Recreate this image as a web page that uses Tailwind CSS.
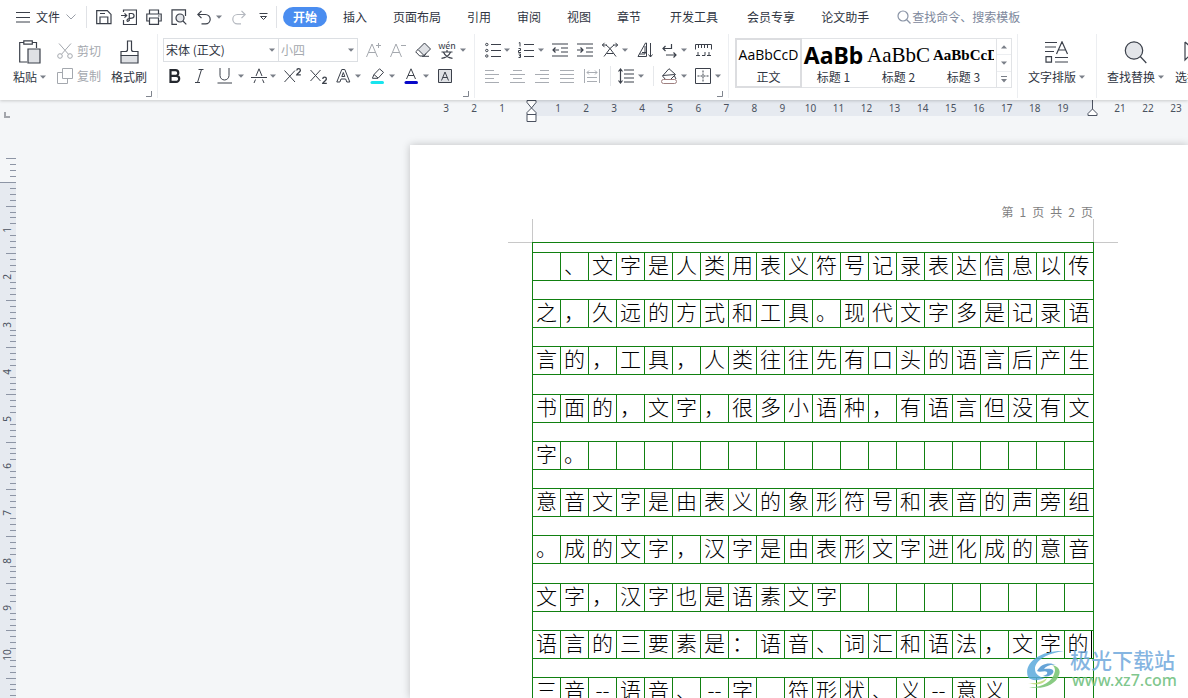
<!DOCTYPE html>
<html lang="zh-CN">
<head>
<meta charset="utf-8">
<title>文字文稿</title>
<script src="https://cdn.jsdelivr.net/npm/@tailwindcss/browser@4"></script>
</head>
<body class="h-screen flex flex-col overflow-hidden bg-[#f4f6f8] text-[#2f3542] text-[12px] leading-4 font-['Noto_Sans_CJK_SC',sans-serif]">
<svg width="0" height="0" class="absolute" aria-hidden="true">
  <symbol id="dn" viewBox="0 0 6 4"><path d="M0 .5h6L3 3.8z" fill="#7a7f88"/></symbol>
  <symbol id="corner" viewBox="0 0 6 6"><path d="M5.500 0v5.500H0" fill="none" stroke="#80858e"/></symbol>
</svg>

<header class="relative z-10 bg-white h-[100px] shrink-0 shadow-[0_1px_3px_rgba(0,0,0,0.18)] overflow-hidden">
  <div class="flex items-center h-[34px] pl-4 whitespace-nowrap">
    <button class="flex items-center w-[70px]" aria-label="文件">
      <svg class="w-[15px] h-3 mr-[5px]" viewBox="0 0 15 12" fill="none" stroke="#3b404a"><path d="M0 1.500h14M0 6.500h14M0 11h14"/></svg>文件
      <svg class="w-[10px] h-[6px] ml-[6px]" viewBox="0 0 10 6" fill="none" stroke="#9a9fa8"><path d="M.5.5 5 5 9.500.5"/></svg>
    </button>
    <span class="w-px h-[22px] bg-[#e0e2e6] mr-[9px]"></span>
    <button class="w-[25px]" aria-label="保存"><svg class="size-4" viewBox="0 0 16 16" fill="none" stroke="#3b404a" stroke-width="1.200"><path d="M.7 1.700h10.600l3.700 3.700v9.300H.7zM4 14.500V8h7.800v6.500M4 4.500h5"/></svg></button>
    <button class="w-[25px]" aria-label="输出为PDF"><svg class="size-4" viewBox="0 0 16 16" fill="none" stroke="#3b404a" stroke-width="1.200"><path d="M2.500 3V1h13v14.500h-13V11M0 6.500h5.500M3.500 4.300l2.200 2.200-2.200 2.200M8.300 12V4.500h2.400a2.300 2.300 0 0 1 0 4.700c-3 0-4.700 1-4.700 2.300 0 1.500 2.300.8 2.300-1"/></svg></button>
    <button class="w-[25px]" aria-label="打印"><svg class="size-4" viewBox="0 0 16 16" fill="none" stroke="#3b404a" stroke-width="1.200"><path d="M3.500 5V1h9v4M3.500 12H.8V5h14.400v7h-2.700M3.500 9h9v6.300h-9zM12 7h1.500"/></svg></button>
    <button class="w-[26px]" aria-label="打印预览"><svg class="size-4" viewBox="0 0 16 16" fill="none" stroke="#3b404a" stroke-width="1.200"><path d="M6 15.300H1V.8h13.500V7"/><circle cx="9" cy="9" r="4" fill="#e3e5e9"/><path d="m12 12 3.300 3.300"/></svg></button>
    <button class="w-[34px] flex items-center" aria-label="撤销"><svg class="size-[15px] mr-1" viewBox="0 0 15 15" fill="none" stroke="#3b404a" stroke-width="1.200"><path d="M4.500.8.800 4.500l3.700 3.700M1 4.500h7.500a4.700 4.700 0 0 1 0 9.400H4.500"/></svg><svg class="w-[6px] h-1"><use href="#dn"/></svg></button>
    <button class="w-[28px]" aria-label="恢复"><svg class="size-[15px]" viewBox="0 0 15 15" fill="none" stroke="#b4b8bf" stroke-width="1.200"><path d="m10.500.8 3.700 3.700-3.700 3.700M14 4.500H6.500a4.700 4.700 0 0 0 0 9.400h3.500"/></svg></button>
    <button class="w-[17px]" aria-label="自定义快速访问工具栏"><svg class="w-[9px] h-2" viewBox="0 0 9 8" fill="none" stroke="#3b404a"><path d="M.5.500h8M1.500 3.500h6l-3 3z"/></svg></button>
    <span class="w-px h-[22px] bg-[#e0e2e6] mr-[6px]"></span>
    <nav class="flex items-center">
      <button class="w-[44px] h-5 rounded-full bg-[#4a8df0] text-white font-bold mr-4">开始</button>
      <div class="flex gap-[26px]"><button>插入</button><button>页面布局</button><button>引用</button><button>审阅</button><button>视图</button><button>章节</button></div>
      <button class="mx-[29px]">开发工具</button>
      <div class="flex gap-[26px]"><button>会员专享</button><button>论文助手</button></div>
    </nav>
    <label class="flex items-center ml-[28px] gap-px"><svg class="size-[14px]" viewBox="0 0 14 14" fill="none" stroke="#8a94a6" stroke-width="1.200"><circle cx="6" cy="6" r="5"/><path d="m9.500 9.500 4 4"/></svg>
      <input class="w-[130px] outline-none placeholder:text-[#7d889c]" placeholder="查找命令、搜索模板" aria-label="查找命令、搜索模板"></label>
  </div>

  <div class="flex h-[64px] whitespace-nowrap">
    <!-- 剪贴板 -->
    <section class="w-[158px] shrink-0 flex flex-col border-r border-[#eceef1]">
      <div class="flex h-[54px] pl-[13px] pt-[6px]">
        <button class="w-[44px] flex flex-col items-start">
          <svg class="w-[22px] h-6 ml-[6px]" viewBox="0 0 22 24" fill="none" stroke="#3b404a" stroke-width="1.200"><path d="M8 22H.7V2.500h3.800M13.500 2.500h4V8M4.800.8h8.500v3.400H4.800z"/><path d="M9 9h12v14H9z" fill="#dfe1e5"/></svg>
          <span class="flex items-center mt-[5px] gap-[3px]">粘贴<svg class="w-[6px] h-1"><use href="#dn"/></svg></span>
        </button>
        <div class="w-[54px] flex flex-col gap-[9px] pt-[3px] text-[#a4a8ae]">
          <button class="flex items-center gap-1"><svg class="size-4" viewBox="0 0 16 16" fill="none" stroke="#a4a8ae"><circle cx="3" cy="13" r="2.300"/><circle cx="13" cy="13" r="2.300"/><path d="M2 .5 11.500 11.300M14 .5 4.500 11.300"/></svg>剪切</button>
          <button class="flex items-center gap-1"><svg class="size-4" viewBox="0 0 16 16" fill="none" stroke="#a4a8ae"><path d="M5.500.5h10v10h-10zM5.500 4.500h-5v11h10v-5"/></svg>复制</button>
        </div>
        <button class="flex flex-col items-center">
          <svg class="w-[19px] h-6" viewBox="0 0 19 24" fill="none" stroke="#3b404a" stroke-width="1.200"><path d="M1 15.500h17V23H1z" fill="#dfe1e5"/><path d="M1 15.500v-4h4.500q2 0 2-2V1h4v8.500q0 2 2 2H18v4"/></svg>
          <span class="mt-[5px]">格式刷</span>
        </button>
      </div>
      <button class="self-end mr-[5px] mt-[3px]" aria-label="剪贴板选项"><svg class="size-[6px] block"><use href="#corner"/></svg></button>
    </section>

    <!-- 字体 -->
    <section class="w-[317px] shrink-0 flex flex-col border-r border-[#eceef1] pl-[5px]">
      <div class="flex items-center h-6 mt-1">
        <div class="flex h-6 w-[195px] border border-[#dcdfe3] mr-2">
          <label class="grid items-center w-[115px] border-r border-[#dcdfe3]"><select aria-label="字体" class="col-start-1 row-start-1 appearance-none w-full pl-[2px] outline-none"><option>宋体 (正文)</option></select><svg class="col-start-1 row-start-1 justify-self-end mr-[3px] w-[6px] h-1 pointer-events-none"><use href="#dn"/></svg></label>
          <label class="grid items-center flex-1 text-[#a4a8ae]"><select aria-label="字号" class="col-start-1 row-start-1 appearance-none w-full pl-[2px] outline-none"><option>小四</option></select><svg class="col-start-1 row-start-1 justify-self-end mr-[3px] w-[6px] h-1 pointer-events-none"><use href="#dn"/></svg></label>
        </div>
        <button class="w-6" aria-label="增大字号"><svg class="size-4" viewBox="0 0 16 16" fill="none" stroke="#a4a8ae"><path d="M.5 15 6 2l5.500 13M2.500 10.500h7M10 3.500h5M12.500 1v5"/></svg></button>
        <button class="w-[25px]" aria-label="减小字号"><svg class="size-4" viewBox="0 0 16 16" fill="none" stroke="#a4a8ae"><path d="M.5 15 6 2l5.500 13M2.500 10.500h7M11 3.500h5"/></svg></button>
        <button class="w-6" aria-label="清除格式"><svg class="size-4" viewBox="0 0 16 16" fill="none" stroke="#3b404a"><path d="M9.500 1 15.500 7 9 13.500 3 7.500z" fill="#dfe1e5"/><path d="M3 7.500.7 9.800l4 4.200h4.500L11 11.500M7 14.300h7"/></svg></button>
        <button class="flex items-center gap-[5px]" aria-label="拼音指南"><span class="flex flex-col items-center w-4"><span class="text-[9px] leading-[7px]">wén</span><svg class="w-3 h-[9px] mt-px" viewBox="0 0 12 9" fill="none" stroke="#3b404a" stroke-width="1.200"><path d="M.5 2h11M6 0v2M2.500 2.200C4 5.500 7 7.700 11.500 8.400M9.500 2.200C8 5.500 5 7.700.5 8.400"/></svg></span><svg class="w-[6px] h-1"><use href="#dn"/></svg></button>
      </div>
      <div class="flex items-center h-[26px] mt-px pl-[6px]">
        <button class="w-[25px]" aria-label="加粗"><svg class="w-3 h-[14px]" viewBox="0 0 12 14" fill="none" stroke="#24282f" stroke-width="2.200"><path d="M1.500 1.200h5a2.800 2.800 0 0 1 0 5.600h-5zM1.500 6.800h5.700a3 3 0 0 1 0 6H1.500z"/></svg></button>
        <button class="w-[23px]" aria-label="倾斜"><svg class="w-[11px] h-[14px]" viewBox="0 0 11 14" fill="none" stroke="#3b404a"><path d="M4.500.5h5M1 13.500h5M7.500.5 3.500 13.500"/></svg></button>
        <button class="w-[34px] flex items-center gap-[5px]" aria-label="下划线"><svg class="size-4" viewBox="0 0 16 16" fill="none" stroke="#3b404a"><path d="M3 0v7.500a4.500 4.500 0 0 0 9 0V0M.5 15h14.500"/></svg><svg class="w-[6px] h-1"><use href="#dn"/></svg></button>
        <button class="w-[33px] flex items-center gap-[3px]" aria-label="删除线"><svg class="size-4" viewBox="0 0 16 16" fill="none" stroke="#3b404a"><path d="M5 8 8 .8 11 8M0 9.500h16M3 15l1.500-3.500M13 15l-1.500-3.500"/></svg><svg class="w-[6px] h-1"><use href="#dn"/></svg></button>
        <button class="w-[26px]" aria-label="上标"><svg class="w-[18px] h-4" viewBox="0 0 18 16" fill="none" stroke="#3b404a"><path d="M.5 2.500 11 14M11 2.500.5 14"/><path d="M12.800 2.500c0-2.400 3.600-2.400 3.600 0 0 1.300-3 2.700-3.600 4.300h4" stroke-width="1.300"/></svg></button>
        <button class="w-[26px]" aria-label="下标"><svg class="w-[18px] h-4" viewBox="0 0 18 16" fill="none" stroke="#3b404a"><path d="M.5 2 10.500 13M10.500 2 .5 13"/><path d="M12.800 11c0-2.400 3.600-2.400 3.600 0 0 1.300-3 2.700-3.600 4.300h4" stroke-width="1.300"/></svg></button>
        <button class="w-[34px] flex items-center gap-1" aria-label="文字效果"><svg class="w-[15px] h-4" viewBox="0 0 15 16" fill="none" stroke="#3b404a"><path d="M.8 14 5.800 1.500h3L13.800 14h-3L9.700 11H5L3.900 14zM5.800 8.500h3L7.300 4.500z"/></svg><svg class="w-[6px] h-1"><use href="#dn"/></svg></button>
        <button class="w-[34px] flex items-center gap-1" aria-label="突出显示"><svg class="w-[15px] h-4" viewBox="0 0 15 16" fill="none" stroke="#3b404a"><path d="M2.500 10 4 6.500 9.500.8l4 3.500-5.500 6H2.500zM4 6.500 8 10"/><path d="M2 14.500h10.500" stroke="#18e4ee" stroke-width="3" stroke-linecap="round"/></svg><svg class="w-[6px] h-1"><use href="#dn"/></svg></button>
        <button class="w-[34px] flex items-center gap-1" aria-label="字体颜色"><svg class="w-[15px] h-4" viewBox="0 0 15 16" fill="none" stroke="#3b404a"><path d="M2.500 11 7 .8 11.500 11M4 7.500h6"/><path d="M2 14.500h10.500" stroke="#0808c8" stroke-width="3" stroke-linecap="round"/></svg><svg class="w-[6px] h-1"><use href="#dn"/></svg></button>
        <button aria-label="字符底纹"><svg class="size-[15px]" viewBox="0 0 15 15" fill="none" stroke="#3b404a"><path d="M.5.500h13v13H.5z" fill="#dfe1e5"/><path d="M3.500 11.500 7 3l3.500 8.500M4.800 8.500h4.500"/></svg></button>
      </div>
      <button class="self-end mr-[5px] mt-[2px]" aria-label="字体选项"><svg class="size-[6px] block"><use href="#corner"/></svg></button>
    </section>

    <!-- 段落 -->
    <section class="w-[254px] shrink-0 flex flex-col border-r border-[#eceef1] pl-[10px]">
      <div class="flex items-center h-6 mt-1">
        <button class="w-[33px] flex items-center gap-[3px]" aria-label="项目符号"><svg class="size-4" viewBox="0 0 16 16" fill="none" stroke="#3b404a"><path d="M6 2.500h10M6 8.500h10M6 14.500h10"/><circle cx="1.800" cy="2.500" r="1.200"/><circle cx="1.800" cy="8.500" r="1.200"/><circle cx="1.800" cy="14" r="1.200"/></svg><svg class="w-[6px] h-1"><use href="#dn"/></svg></button>
        <button class="w-[34px] flex items-center gap-1" aria-label="编号"><svg class="size-4" viewBox="0 0 16 16" fill="none" stroke="#3b404a"><path d="M6 2.500h10M6 8.500h10M6 14.500h10M.8 1 2 .5V4.500M.5 6.500h2v2h-2v2h2.500M.5 12h2v3.500h-2M1 13.700h1.500"/></svg><svg class="w-[6px] h-1"><use href="#dn"/></svg></button>
        <button class="w-[25px]" aria-label="减少缩进"><svg class="size-4" viewBox="0 0 16 16" fill="none" stroke="#3b404a" stroke-width="1.200"><path d="M0 2h16M9 6h7M9 10h7M0 14h16M7 8H1M3.500 5.500 1 8l2.500 2.500"/></svg></button>
        <button class="w-[25px]" aria-label="增加缩进"><svg class="size-4" viewBox="0 0 16 16" fill="none" stroke="#3b404a" stroke-width="1.200"><path d="M0 2h16M9 6h7M9 10h7M0 14h16M0 8h6M3.500 5.500 6 8l-2.500 2.500"/></svg></button>
        <button class="w-[35px] flex items-center gap-1" aria-label="中文版式"><svg class="size-4" viewBox="0 0 16 16" fill="none" stroke="#3b404a"><path d="M0 3h5M2.500.8.500 3l2 2.200M16 3h-5M13.500.8l2 2.200-2 2.200M2 14.500 8 6.500l6 8M4.500 11.500h7M4 3l4 3.500L12 3"/></svg><svg class="w-[6px] h-1"><use href="#dn"/></svg></button>
        <button class="w-[25px]" aria-label="排序"><svg class="size-4" viewBox="0 0 16 16" fill="none" stroke="#3b404a"><path d="M9.500 1v13.500H1L8.500 1zM5 10.500h4.500M2.500 12H8V4M13.500 1v14M11.500 12.500l2 2.500 2-2.500"/></svg></button>
        <button class="w-[33px] flex items-center gap-1" aria-label="显示段落标记"><svg class="size-[15px]" viewBox="0 0 15 15" fill="none" stroke="#3b404a" stroke-width="1.200"><path d="M9.500 1v4.500H1M3.500 3 1 5.500 3.500 8M4 12h10M11.500 9.500 14 12l-2.500 2.500"/></svg><svg class="w-[6px] h-1"><use href="#dn"/></svg></button>
        <button aria-label="制表位"><svg class="w-[17px] h-3" viewBox="0 0 17 12" fill="none" stroke="#3b404a"><path d="M.5 5.500v-5h16v5M3.500 1v3M6.500 1v3M9.500 1v3M12.500 1v3M1 11.500h4M3 11V8M7 11.500h3V8M12 11.500h4M14 11V8"/></svg></button>
      </div>
      <div class="flex items-center h-[26px] mt-px">
        <button class="w-[25px]" aria-label="左对齐"><svg class="w-[15px] h-[13px]" viewBox="0 0 15 13" stroke="#a9adb3"><path d="M0 .5h9M0 4.500h14M0 8.500h9M0 12.500h14"/></svg></button>
        <button class="w-[25px]" aria-label="居中"><svg class="w-[15px] h-[13px]" viewBox="0 0 15 13" stroke="#a9adb3"><path d="M3 .5h9M0 4.500h15M3 8.500h9M0 12.500h15"/></svg></button>
        <button class="w-[25px]" aria-label="右对齐"><svg class="w-[15px] h-[13px]" viewBox="0 0 15 13" stroke="#a9adb3"><path d="M5 .5h9M0 4.500h14M5 8.500h9M0 12.500h14"/></svg></button>
        <button class="w-6" aria-label="两端对齐"><svg class="w-[15px] h-[13px]" viewBox="0 0 15 13" stroke="#a9adb3"><path d="M0 .5h14M0 4.500h14M0 8.500h14M0 12.500h14"/></svg></button>
        <button class="w-[26px]" aria-label="分散对齐"><svg class="w-4 h-[14px]" viewBox="0 0 16 14" fill="none" stroke="#a9adb3"><path d="M.5 0v14M15.500 0v14M3 3.500h10M5 1.500l-2 2 2 2M11 1.500l2 2-2 2M3 8.500h10M3 12.500h10"/></svg></button>
        <span class="w-px h-5 bg-[#e6e8eb] mr-[7px]"></span>
        <button class="w-[35px] flex items-center gap-1" aria-label="行距"><svg class="size-4" viewBox="0 0 16 16" fill="none" stroke="#3b404a" stroke-width="1.200"><path d="M6 2h10M6 6h10M6 10h10M6 14h10M2.500 1v14M.5 3.500l2-2.500 2 2.500M.5 12.500l2 2.500 2-2.500"/></svg><svg class="w-[6px] h-1"><use href="#dn"/></svg></button>
        <span class="w-px h-5 bg-[#e6e8eb] mr-[7px]"></span>
        <button class="w-[34px] flex items-center gap-1" aria-label="底纹颜色"><svg class="size-4" viewBox="0 0 16 16" fill="none" stroke="#3b404a"><path d="M8 .7 14.500 6.500 9 12H5L1.500 8zM1.800 7.500l12-1M13.500 8l1.500 3" fill="#fff"/><rect x=".5" y="11.500" width="15" height="4" rx="2" fill="#fff" stroke="#a08080"/></svg><svg class="w-[6px] h-1"><use href="#dn"/></svg></button>
        <button class="flex items-center gap-1" aria-label="边框"><svg class="size-4" viewBox="0 0 16 16" fill="none" stroke="#3b404a"><path d="M.5.500h15v15H.5z"/><path d="M8 2.500v11M2.500 8h11" stroke-dasharray="2 1"/></svg><svg class="w-[6px] h-1"><use href="#dn"/></svg></button>
      </div>
      <button class="self-end mr-[5px] mt-[2px]" aria-label="段落选项"><svg class="size-[6px] block"><use href="#corner"/></svg></button>
    </section>

    <!-- 样式 -->
    <section class="w-[289px] shrink-0 border-r border-[#eceef1] pl-[6px] pt-1">
      <div class="flex w-[277px] h-[50px] border border-[#e1e3e6]">
        <button class="w-[65px] outline-2 outline-[#dcdde0] -outline-offset-1 overflow-hidden flex flex-col items-center">
          <span class="h-[30px] leading-[32px] text-[14px] text-black font-['Open_Sans',sans-serif]">AaBbCcD</span><span>正文</span></button>
        <button class="w-[65px] px-px flex flex-col items-center"><span class="h-[30px] leading-[32px] text-[23px] font-bold text-black font-['Noto_Sans',sans-serif]">AaBb</span><span>标题 1</span></button>
        <button class="w-[65px] px-px flex flex-col items-center"><span class="h-[30px] leading-[32px] text-[21px] text-black font-['Liberation_Serif',serif]">AaBbC</span><span>标题 2</span></button>
        <button class="w-[65px] px-[2px] flex flex-col items-center"><span class="h-[30px] w-full overflow-hidden text-left leading-[32px] text-[15px] font-bold text-black font-['Liberation_Serif',serif]">AaBbCcD</span><span>标题 3</span></button>
        <div class="flex-1 flex flex-col border-l border-[#e1e3e6] divide-y divide-[#eceef1]">
          <button class="flex-1 flex items-center justify-center" aria-label="上一行"><svg class="w-[6px] h-1 rotate-180"><use href="#dn"/></svg></button>
          <button class="flex-1 flex items-center justify-center" aria-label="下一行"><svg class="w-[6px] h-1"><use href="#dn"/></svg></button>
          <button class="flex-1 flex items-center justify-center" aria-label="更多样式"><svg class="w-[6px] h-[7px]" viewBox="0 0 6 7"><path d="M0 0h6v1H0zM0 3h6L3 6.500z" fill="#7a7f88"/></svg></button>
        </div>
      </div>
    </section>

    <section class="w-[79px] shrink-0 border-r border-[#eceef1] pl-[10px] pt-[7px]">
      <button class="flex flex-col items-center"><svg class="w-6 h-[23px]" viewBox="0 0 24 23" fill="none" stroke="#3b404a" stroke-width="1.200"><path d="M0 1.500h12M0 6h11M0 10.500h9M11.500 13 17 .8 22.500 13M13.500 9h7M1 15.700h5.500v5.500H1zM10 16.500h13M10 21h13"/></svg><span class="flex items-center gap-[3px] mt-[5px]">文字排版<svg class="w-[6px] h-1"><use href="#dn"/></svg></span></button>
    </section>
    <section class="shrink-0 flex gap-[11px] pl-[10px] pt-[7px]">
      <button class="flex flex-col items-center"><svg class="w-6 h-[23px]" viewBox="0 0 24 23" fill="none" stroke="#3b404a" stroke-width="1.200"><circle cx="10" cy="9.500" r="8.700" fill="#e3e5e9"/><path d="m16.300 15.500 6 6.500"/></svg><span class="flex items-center gap-[3px] mt-[5px]">查找替换<svg class="w-[6px] h-1"><use href="#dn"/></svg></span></button>
      <button class="flex flex-col items-center"><svg class="w-[14px] h-[23px]" viewBox="0 0 14 23" fill="none" stroke="#3b404a" stroke-width="1.200"><path d="M5 1v18l5-5h6M5 1l9 8"/></svg><span class="mt-[5px]">选择</span></button>
    </section>
  </div>
</header>

<!-- 水平标尺 -->
<div id="hruler" class="h-4 shrink-0 flex text-[10px] leading-4 text-center text-[#4b5260] font-['Noto_Sans',sans-serif]">
  <div class="w-[531px] shrink-0 flex">
    <svg class="size-[6px] ml-1 mt-3 shrink-0 overflow-visible" viewBox="0 0 6 6" fill="none" stroke="#a3a6ac" stroke-width="2"><path d="M1 0v5h5"/></svg>
    <div class="flex-1 flex justify-end pr-[15px]" data-ticks="3,2,1"></div>
  </div>
  <div class="relative w-[561px] shrink-0 bg-[#e6eaf0]">
    <div class="flex pl-[13px] pr-[15px]" data-ticks="1,2,3,4,5,6,7,8,9,10,11,12,13,14,15,16,17,18,19"></div>
    <svg class="absolute -left-[5px] top-0 w-[11px] h-[22px]" viewBox="0 0 11 22" fill="#fff" stroke="#4b5260"><path d="M1 .5h9v2L5.500 8 1 2.500zM1 14.500v-2L5.500 8 10 12.500v2zM1 14.500h9v7H1z"/></svg>
    <svg class="absolute -right-[6px] top-0 w-[11px] h-4" viewBox="0 0 11 16" fill="#fff" stroke="#4b5260"><path d="M5.500 0v9M1 15.500v-2L5.500 9 10 13.500v2z"/></svg>
  </div>
  <div class="flex pl-[14px]" data-ticks="21,22,23"></div>
</div>

<main class="flex-1 min-h-0 flex">
  <div class="w-4 shrink-0 overflow-hidden">
    <svg id="vruler" class="w-4 h-[582px] font-['Noto_Sans',sans-serif]" viewBox="0 0 16 582" font-size="10" fill="#4b5260" aria-label="垂直标尺"></svg>
  </div>
  <div class="flex-1 min-w-0 pl-[394px] pt-[29px] flex">
    <article class="flex-1 min-w-0 bg-white shadow-[0_0_8px_rgba(0,0,0,0.22)] pl-[98px] overflow-hidden">
      <p class="flex gap-[6px] justify-end w-[585px] pt-[59px] h-[74px] text-[#7f7f7f]"><span>第</span><span>1</span><span>页</span><span>共</span><span>2</span><span>页</span></p>
      <div class="flex items-start">
        <div class="w-6 h-6 border-b border-[#c8c8c8]"></div>
        <div class="w-[562px] shrink-0">
          <div class="h-[23px] border-x border-[#c8c8c8]"></div>
          <div class="border border-[#118011] pt-[9px] pb-20">
            <div id="grid" class="h-[454px] flex flex-col justify-between text-[21px] leading-[23px] font-light text-black font-['Noto_Sans_CJK_SC',serif]"></div>
          </div>
        </div>
        <div class="w-6 h-6 border-b border-[#c8c8c8]"></div>
      </div>
    </article>
  </div>
</main>

<!-- 水印 -->
<div class="absolute right-[11px] bottom-[9px] z-20 flex items-center gap-1 pointer-events-none whitespace-nowrap">
  <svg class="w-[40px] h-[38px]" viewBox="0 0 40 38" aria-hidden="true">
    <path d="M2 27C-3 13 14 0 38 1 22 3 9 10 9 19c0 5 4 8 10 9-7 3-14 3-17-1z" fill="#5aa9dc" opacity=".85"/>
    <path d="M11 21c4-8 13-9 19-6-5-1-10 1-12 4 6-1 11 0 9 4-2 3-6 4-10 3 3-1 5-2 4-4-2-2-7 1-10-1z" fill="#4b94d0" opacity=".85"/>
    <path d="M3 37c10 1 24-4 26-16 0-3-1-5-3-6 6 1 9 5 7 10C30 35 16 40 3 37z" fill="#7cc576" opacity=".9"/>
    <path d="M2 33c7 1 14-1 19-5-2 6-10 8-19 5z" fill="#b5d56a" opacity=".8"/>
  </svg>
  <div class="flex flex-col items-start">
    <span class="text-[21px] leading-[23px] font-medium text-[#6fa8dc]/85">极光下载站</span>
    <span class="text-[16px] leading-[18px] font-medium text-[#6fbf7e]/90 font-['Noto_Sans',sans-serif] pl-[2px]">www.xz7.com</span>
  </div>
</div>

<script>
for (const box of document.querySelectorAll('[data-ticks]')) {
  const even = box.parentElement.id !== 'hruler' && box.dataset.ticks.length > 20;
  box.dataset.ticks.split(',').forEach(n => {
    const s = document.createElement('span');
    s.className = even ? 'flex-1' : 'w-7';
    s.textContent = n;
    box.append(s);
  });
}

let marks = '<rect y="66" width="16" height="516" fill="#e6eaf0"/><rect y="66" width="16" height="1" fill="#8d95a5"/>';
for (let i = -4; i < 88; i++) {
  if (i === 0) continue;
  const y = Math.round(66 + i * 5.9);
  if (i > 0 && i % 8 === 0) {
    marks += `<text transform="translate(11 ${y + 1}) rotate(-90)" text-anchor="middle">${i / 8}</text>`;
    continue;
  }
  const len = i % 4 === 0 ? 10 : 6;
  marks += `<rect x="${16 - len}" y="${y}" width="${len}" height="1" fill="#8d95a5"/>`;
}
document.getElementById('vruler').innerHTML = marks;

const lines = [
  ' 、文字是人类用表义符号记录表达信息以传',
  '之，久远的方式和工具。现代文字多是记录语',
  '言的，工具，人类往往先有口头的语言后产生',
  '书面的，文字，很多小语种，有语言但没有文',
  '字。',
  '意音文字是由表义的象形符号和表音的声旁组',
  '。成的文字，汉字是由表形文字进化成的意音',
  '文字，汉字也是语素文字',
  '语言的三要素是：语音、词汇和语法，文字的|',
  '三音=语音、=字 符形状、义=意义'
];
for (const line of lines) {
  const row = document.createElement('div');
  row.className = 'grid grid-cols-20 h-[29px] border-y border-[#118011] divide-x divide-[#118011]';
  for (let i = 0; i < 20; i++) {
    const cell = document.createElement('span');
    cell.className = 'text-center';
    cell.textContent = (line[i] || '').replace('=', '--');
    if (i === 19 && line[20]) cell.className = 'text-center mr-px border-r border-r-black';
    row.append(cell);
  }
  document.getElementById('grid').append(row);
}
</script>
</body>
</html>
